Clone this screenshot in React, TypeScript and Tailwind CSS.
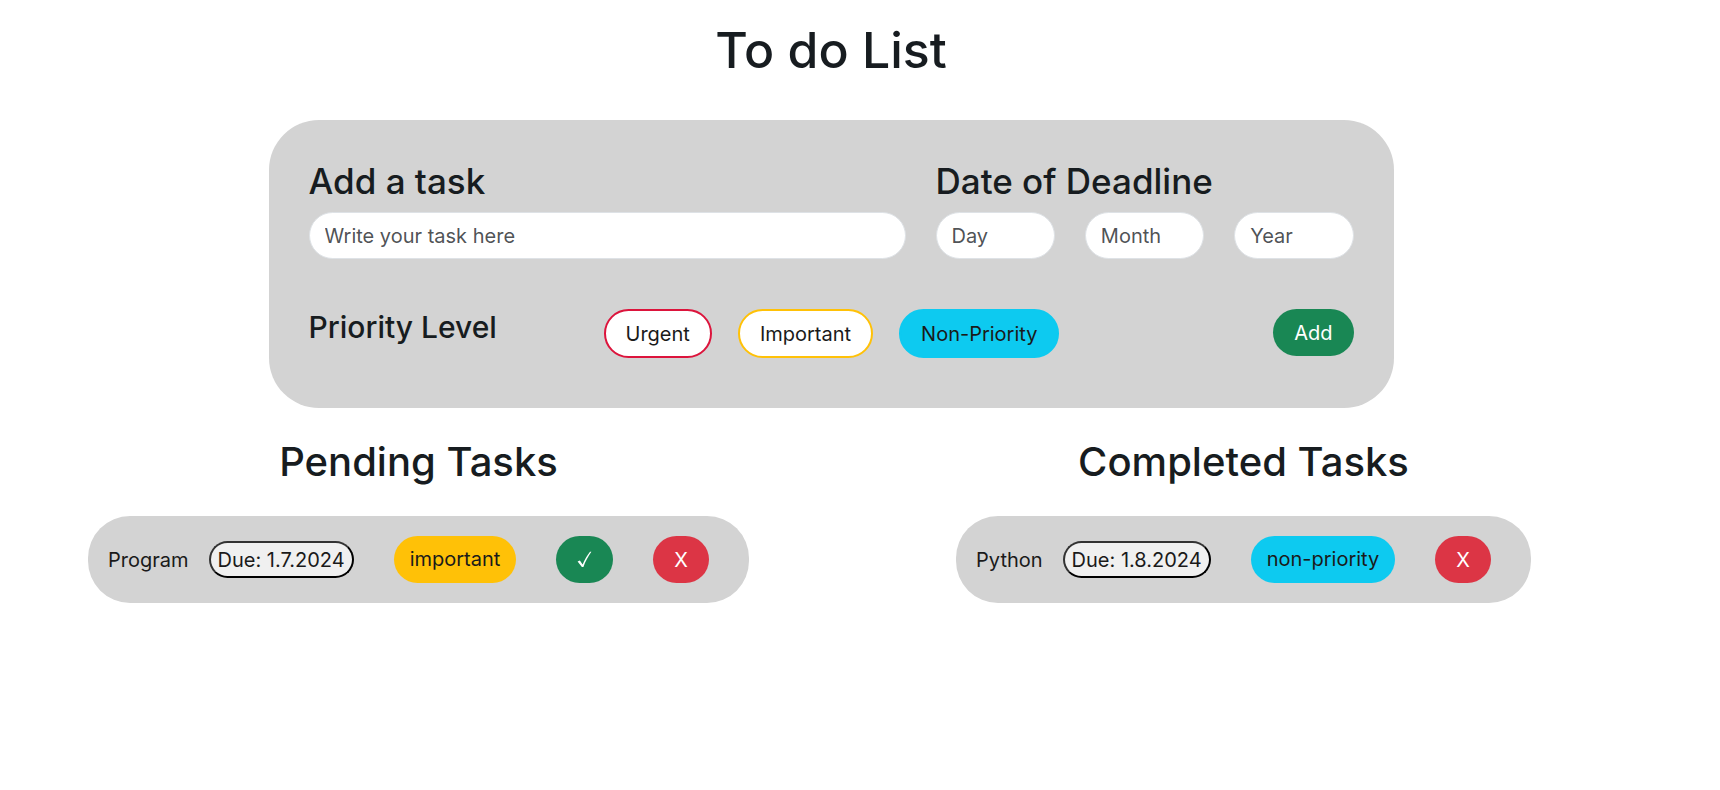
import { useState } from "react";
import type { ReactNode } from "react";

type Priority = "urgent" | "important" | "non-priority";

type Task = { name: string; due: string; priority: Priority };

const pending: Task[] = [{ name: "Program", due: "1.7.2024", priority: "important" }];
const completed: Task[] = [{ name: "Python", due: "1.8.2024", priority: "non-priority" }];

const badgeColors: Record<Priority, string> = {
  urgent: "bg-[#dc3545] text-white",
  important: "bg-[#ffc107] text-[#1a1a1a]",
  "non-priority": "bg-[#0dcaf0] text-[#1a1a1a]",
};

const choices: { id: Priority; label: string; idle: string; active: string }[] = [
  { id: "urgent", label: "Urgent", idle: "border-[#dc143c] bg-white", active: "border-[#dc3545] bg-[#dc3545]" },
  { id: "important", label: "Important", idle: "border-[#ffc107] bg-white", active: "border-[#ffc107] bg-[#ffc107]" },
  { id: "non-priority", label: "Non-Priority", idle: "border-[#0dcaf0] bg-white", active: "border-[#0dcaf0] bg-[#0dcaf0]" },
];

const field =
  "h-[47px] w-full min-w-0 rounded-full border border-[#dee2e6] bg-white px-[15px] text-[20px] text-[#212529] placeholder:text-[#212529]/80 outline-none";

function TaskRow({ task, actions }: { task: Task; actions: ReactNode }) {
  return (
    <li className="flex items-center gap-[40px] rounded-[42px] bg-[#d3d3d3] p-[20px] pr-[40px] text-[#1a1a1a]">
      <div className="flex items-center gap-[20px]">
        <span>{task.name}</span>
        <span className="h-[37px] rounded-full border-2 border-t-[#333] border-r-black border-b-black border-l-[#333] bg-[#f0f0f0] px-[7px] leading-[34px]">
          Due: {task.due}
        </span>
      </div>
      <span className={`h-[47px] rounded-full px-[16px] leading-[47px] ${badgeColors[task.priority]}`}>
        {task.priority}
      </span>
      {actions}
    </li>
  );
}

function DeleteButton() {
  return (
    <button type="button" aria-label="Delete task" className="h-[47px] rounded-full bg-[#dc3545] px-[21px] text-white">
      X
    </button>
  );
}

export default function App() {
  const [priority, setPriority] = useState<Priority>("non-priority");

  return (
    <main className="pr-[58px] pt-[20px] font-['Inter',sans-serif] text-[20px] leading-[30px] text-[#171c20]">
      <h1 className="text-center text-[50px] leading-[60px] font-medium">To do List</h1>

      <form
        onSubmit={(e) => e.preventDefault()}
        className="mx-auto mt-[40px] max-w-[1125px] rounded-[50px] bg-[#d3d3d3] px-[40px] pt-[40px] pb-[50px]"
      >
        <div className="flex gap-[30px]">
          <div className="min-w-0 grow">
            <label htmlFor="task" className="mb-[10px] block text-[35px] leading-[42px] font-medium">
              Add a task
            </label>
            <input id="task" type="text" placeholder="Write your task here" className={field} />
          </div>
          <fieldset className="w-[418px] shrink-0">
            <legend className="mb-[10px] text-[35px] leading-[42px] font-medium">Date of Deadline</legend>
            <div className="grid grid-cols-3 gap-[30px]">
              <input type="text" aria-label="Day" placeholder="Day" className={field} />
              <input type="text" aria-label="Month" placeholder="Month" className={field} />
              <input type="text" aria-label="Year" placeholder="Year" className={field} />
            </div>
          </fieldset>
        </div>

        <div className="mt-[50px] flex items-start">
          <h2 className="w-[295px] text-[30px] leading-[36px] font-medium">Priority Level</h2>
          <div className="flex gap-[26px]">
            {choices.map((c) => (
              <button
                key={c.id}
                type="button"
                aria-pressed={priority === c.id}
                onClick={() => setPriority(c.id)}
                className={`h-[49px] rounded-full border-2 px-[20px] text-[#1a1a1a] ${priority === c.id ? c.active : c.idle}`}
              >
                {c.label}
              </button>
            ))}
          </div>
          <button type="submit" className="ml-auto h-[47px] rounded-full bg-[#198754] px-[21px] text-white">
            Add
          </button>
        </div>
      </form>

      <div className="mt-[30px] grid grid-cols-2 px-[6px]">
        <section className="flex flex-col items-center">
          <h2 className="text-[40px] leading-[48px] font-medium">Pending Tasks</h2>
          <ul className="mt-[30px]">
            {pending.map((t) => (
              <TaskRow
                key={t.name}
                task={t}
                actions={
                  <>
                    <button
                      type="button"
                      aria-label="Complete task"
                      className="flex h-[47px] items-center rounded-full bg-[#198754] px-[21px] text-white"
                    >
                      <svg width="15" height="17" viewBox="0 0 15 17" fill="currentColor" aria-hidden="true">
                        <path d="M0.6 10.6 L2.9 9.4 L5.6 13.6 C7.6 8.6 10.4 4 13 0.8 L14.4 0.8 C11.2 5.2 8.4 10.4 6.4 16 L4.9 16 Z" />
                      </svg>
                    </button>
                    <DeleteButton />
                  </>
                }
              />
            ))}
          </ul>
        </section>
        <section className="flex flex-col items-center">
          <h2 className="text-[40px] leading-[48px] font-medium">Completed Tasks</h2>
          <ul className="mt-[30px]">
            {completed.map((t) => (
              <TaskRow key={t.name} task={t} actions={<DeleteButton />} />
            ))}
          </ul>
        </section>
      </div>
    </main>
  );
}
